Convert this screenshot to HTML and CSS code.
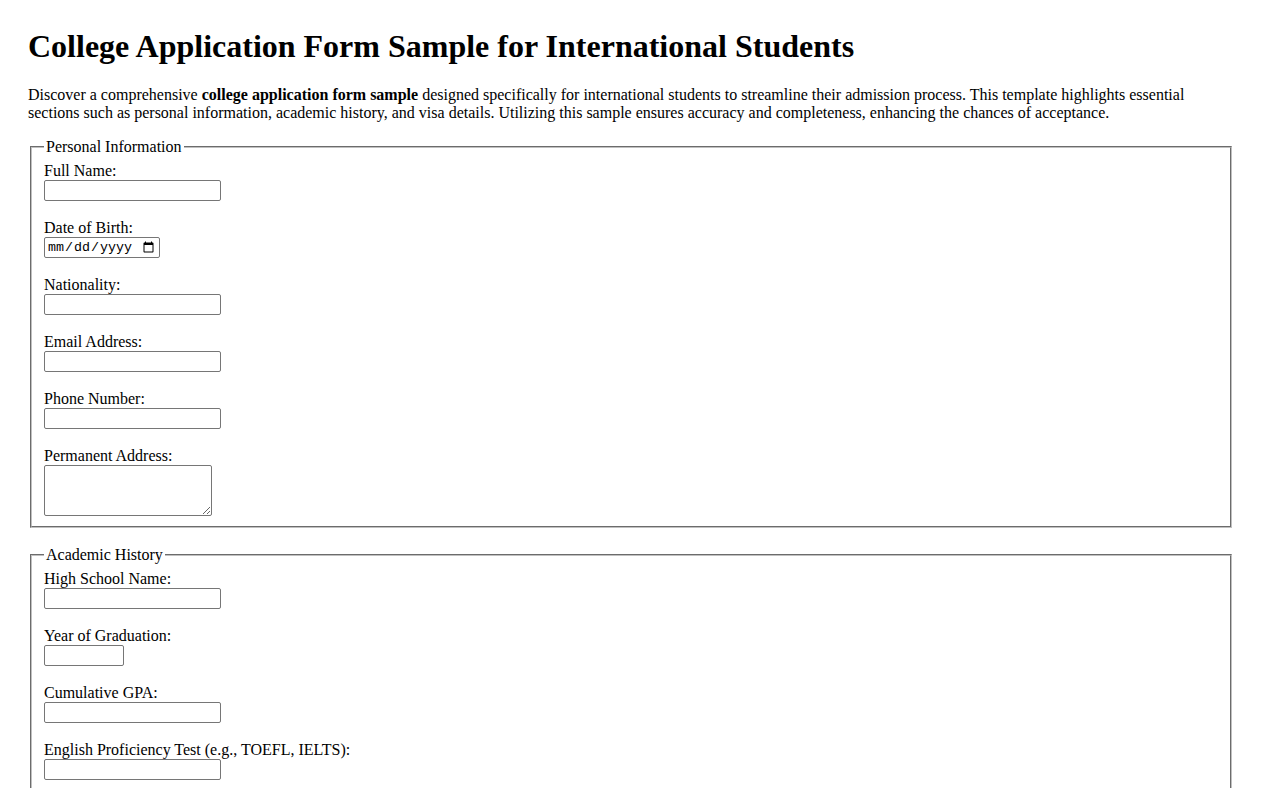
FILE: index.html
```html
<!DOCTYPE html>
<html lang="en">
<head>
<meta charset="utf-8">
<title>College Application Form Sample for International Students</title>
<link rel="stylesheet" href="styles.css">
</head>
<body>
<h1 class="title">College Application Form Sample for International Students</h1>
<p class="intro">Discover a comprehensive <strong>college application form sample</strong> designed specifically for international students to streamline their admission process. This template highlights essential sections such as personal information, academic history, and visa details. Utilizing this sample ensures accuracy and completeness, enhancing the chances of acceptance.</p>
<form class="app-form">
  <fieldset class="section">
    <legend class="section-title">Personal Information</legend>
    <div class="field"><label class="field-label" for="fullname">Full Name:</label><input class="text-input" type="text" id="fullname"></div>
    <div class="field"><label class="field-label" for="dob">Date of Birth:</label><input class="date-input" type="date" id="dob"></div>
    <div class="field"><label class="field-label" for="nat">Nationality:</label><input class="text-input" type="text" id="nat"></div>
    <div class="field"><label class="field-label" for="email">Email Address:</label><input class="text-input" type="email" id="email"></div>
    <div class="field"><label class="field-label" for="phone">Phone Number:</label><input class="text-input" type="tel" id="phone"></div>
    <div class="field field-last"><label class="field-label" for="addr">Permanent Address:</label><textarea class="text-area" id="addr"></textarea></div>
  </fieldset>
  <fieldset class="section">
    <legend class="section-title">Academic History</legend>
    <div class="field"><label class="field-label" for="school">High School Name:</label><input class="text-input" type="text" id="school"></div>
    <div class="field"><label class="field-label" for="year">Year of Graduation:</label><input class="year-input" type="number" id="year"></div>
    <div class="field"><label class="field-label" for="gpa">Cumulative GPA:</label><input class="text-input" type="text" id="gpa"></div>
    <div class="field field-last"><label class="field-label" for="test">English Proficiency Test (e.g., TOEFL, IELTS):</label><input class="text-input" type="text" id="test"></div>
  </fieldset>
  <fieldset class="section">
    <legend class="section-title">Visa Details</legend>
    <div class="field"><label class="field-label" for="passport">Passport Number:</label><input class="text-input" type="text" id="passport"></div>
    <div class="field field-last"><label class="field-label" for="visa">Visa Type:</label><input class="text-input" type="text" id="visa"></div>
  </fieldset>
</form>
</body>
</html>
```
FILE: styles.css
```css
html {
  scrollbar-width: none;
}
html::-webkit-scrollbar {
  display: none;
}
body {
  margin: 0;
  padding: 28px 29px 28px 28px;
  font-family: "Liberation Serif", "Times New Roman", serif;
  font-size: 16px;
  color: #000;
  background: #fff;
}
.title {
  margin: 0 0 21.44px;
  font-size: 32px;
  font-weight: bold;
}
.intro {
  margin: 0 0 16px;
}
.app-form {
  margin: 0;
}
.section {
  margin: 0 2px 17.5px;
  padding: 5.6px 12px 10px;
  border: 2px groove rgb(192, 192, 192);
}
.section-title {
  padding: 0 2px;
}
.field {
  display: flex;
  flex-direction: column;
  align-items: flex-start;
  margin-bottom: 17.6px;
}
.field-last {
  margin-bottom: 0;
}
.field-label {
  display: block;
  line-height: 18.4px;
}
.text-input,
.year-input,
.date-input,
.text-area {
  box-sizing: border-box;
  margin: 0;
  border: 1px solid #767676;
  border-radius: 2px;
  padding: 1px 2px;
  font-family: "Liberation Sans", Arial, sans-serif;
  font-size: 13.333px;
  background: #fff;
}
.text-input {
  width: 177px;
  height: 21px;
}
.year-input {
  width: 80px;
  height: 21px;
}
.date-input {
  width: 116px;
  height: 21px;
  font-family: "Liberation Mono", "DejaVu Sans Mono", monospace;
  font-size: 13.333px;
}
.text-area {
  display: block;
  width: 168px;
  height: 51px;
  font-family: "Liberation Mono", monospace;
  resize: both;
}
```
